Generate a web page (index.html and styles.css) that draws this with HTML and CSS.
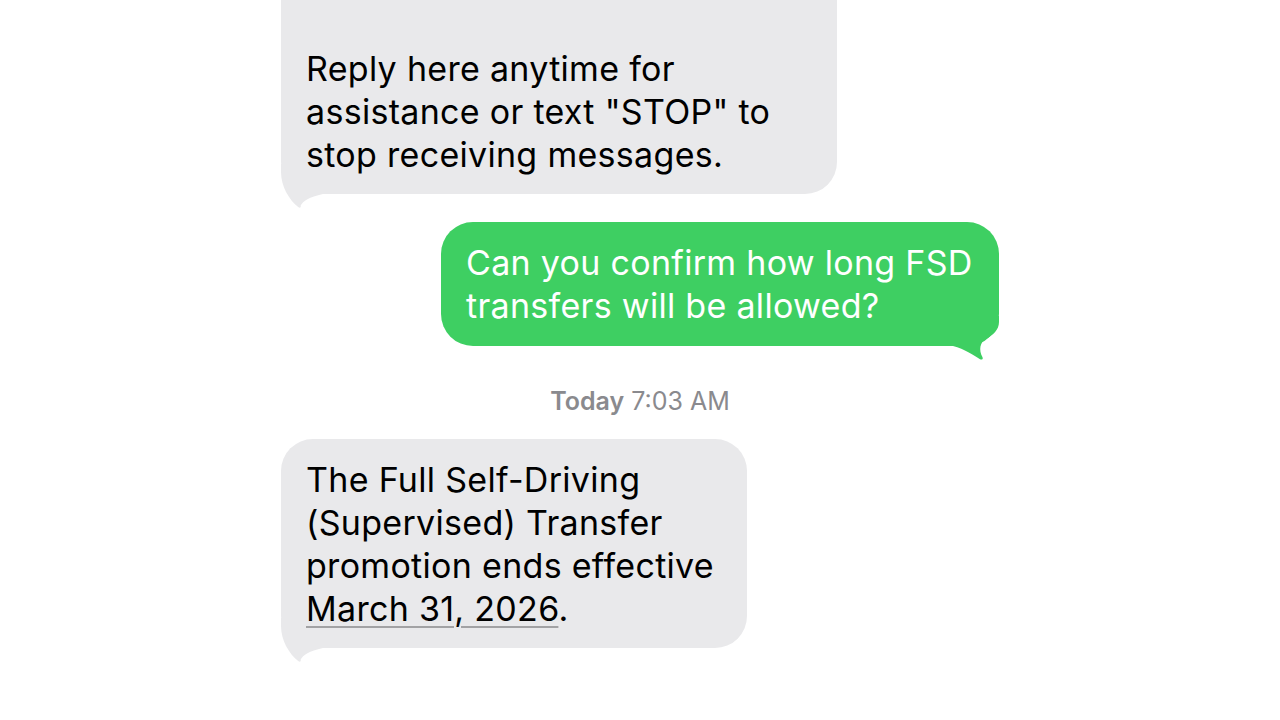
FILE: index.html
```html
<html>
  <head>
    <title>Messages</title>
    <link rel="stylesheet" href="styles.css">
  </head>

  <body>
    <div class="thread">
      <div class="bubble in intro">
        Reply here anytime for<br>
        assistance or text "STOP" to<br>
        stop receiving messages.
        <svg class="tail tail-in" viewBox="0 -30 46 46"><path d="M0,-30 L0,-22 C0,-8 8,6 17.5,13.2 C18.8,14.3 20.4,13.4 19.6,11.8 C22,7 28,3 42,0 L46,0 L46,-30 Z"/></svg>
      </div>

      <div class="bubble out question">
        Can you confirm how long FSD<br>
        transfers will be allowed?
        <svg class="tail tail-out" viewBox="-46 -30 46 46"><path d="M0,-30 L0,-24 C0,-16 -6,-11 -13,-7 C-19,-4 -20.5,4 -16.5,11.2 C-15.6,13 -17.2,14.2 -19,13.2 C-26,9 -34,3 -46,0 L-46,-30 Z"/></svg>
      </div>

      <p class="stamp"><b>Today</b> 7:03 AM</p>

      <div class="bubble in answer">
        The Full Self-Driving<br>
        (Supervised) Transfer<br>
        promotion ends effective<br>
        <a href="#">March 31, 2026</a>.
        <svg class="tail tail-in" viewBox="0 -30 46 46"><path d="M0,-30 L0,-22 C0,-8 8,6 17.5,13.2 C18.8,14.3 20.4,13.4 19.6,11.8 C22,7 28,3 42,0 L46,0 L46,-30 Z"/></svg>
      </div>
    </div>
  </body>
</html>
```

FILE: styles.css
```css
body {
  margin: 0;
  background-color: #FFFFFF;
  color: #000000;
  font-family: Inter, "Noto Sans", sans-serif;
}
.thread {
  display: flex;
  flex-direction: column;
  width: 718px;
  margin: 0 auto;
}
.bubble {
  position: relative;
  z-index: 0;
  box-sizing: border-box;
  padding: 19px 30px 18px 25px;
  border-radius: 32px;
  font-size: 34px;
  line-height: 43px;
  letter-spacing: 0.3px;
  white-space: nowrap;
}
.bubble.in {
  align-self: flex-start;
  background-color: #E9E9EB;
  fill: #E9E9EB;
}
.bubble.out {
  align-self: flex-end;
  background-color: #3ECF62;
  fill: #3ECF62;
  color: #FFFFFF;
}
.intro {
  width: 556px;
  padding-top: 47px;
  border-top-left-radius: 0;
  border-top-right-radius: 0;
}
.question {
  width: 558px;
  margin-top: 28px;
  padding-bottom: 19px;
}
.answer {
  width: 466px;
  margin-top: 23px;
}
.answer a {
  color: inherit;
  text-decoration: underline;
  text-decoration-color: #A2A2A4;
  text-decoration-thickness: 2px;
  text-underline-offset: 5px;
}
.tail {
  position: absolute;
  z-index: -1;
  bottom: -16px;
  width: 46px;
  height: 46px;
}
.tail-in {
  left: 0;
}
.tail-out {
  right: 0;
}
.stamp {
  margin: 40px 0 0;
  color: #8A8A8E;
  font-size: 25px;
  line-height: 30px;
  text-align: center;
}
.stamp b {
  font-weight: 600;
}
```
